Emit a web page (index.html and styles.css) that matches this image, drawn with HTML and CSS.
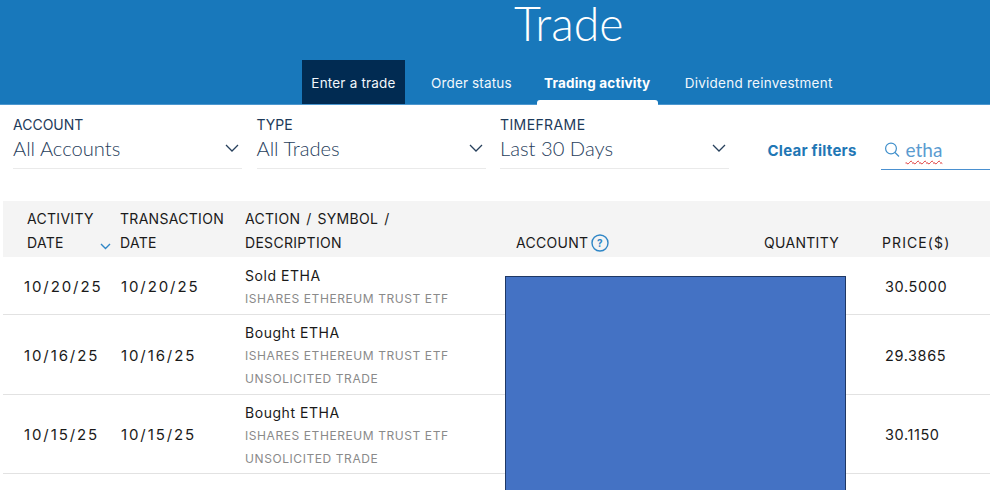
FILE: index.html
```html
<!DOCTYPE html>
<html lang="en">
<head>
<meta charset="utf-8">
<title>Trade</title>
<link rel="stylesheet" href="styles.css">
</head>
<body>
<header class="hero">
  <h1 class="title">Trade</h1>
  <nav class="tabs">
    <a class="tab tab-enter">Enter a trade</a>
    <a class="tab tab-status">Order status</a>
    <a class="tab tab-active">Trading activity</a>
    <a class="tab tab-div">Dividend reinvestment</a>
  </nav>
</header>
<section class="filters">
  <div class="filter">
    <div class="filter-label">ACCOUNT</div>
    <div class="filter-value"><span>All Accounts</span>
      <svg class="chev" width="14" height="8" viewBox="0 0 14 8"><path d="M1 1l6 6 6-6" fill="none" stroke="#27405c" stroke-width="1.3"/></svg></div>
  </div>
  <div class="filter">
    <div class="filter-label">TYPE</div>
    <div class="filter-value"><span>All Trades</span>
      <svg class="chev" width="14" height="8" viewBox="0 0 14 8"><path d="M1 1l6 6 6-6" fill="none" stroke="#27405c" stroke-width="1.3"/></svg></div>
  </div>
  <div class="filter">
    <div class="filter-label label-wide">TIMEFRAME</div>
    <div class="filter-value"><span>Last 30 Days</span>
      <svg class="chev" width="14" height="8" viewBox="0 0 14 8"><path d="M1 1l6 6 6-6" fill="none" stroke="#27405c" stroke-width="1.3"/></svg></div>
  </div>
  <a class="clear">Clear filters</a>
  <div class="search">
    <svg width="16" height="17" viewBox="0 0 16 17"><circle cx="7" cy="7.5" r="5.4" fill="none" stroke="#3f8fcb" stroke-width="1.2"/><path d="M11 11.5l4 4" stroke="#3f8fcb" stroke-width="1.3" fill="none"/></svg>
    <span class="search-text">etha</span>
  </div>
</section>
<section class="table">
  <div class="row head">
    <div class="cell"><div>ACTIVITY</div><div class="date-line">DATE<svg class="sort" width="11" height="7" viewBox="0 0 11 7"><path d="M1 1l4.500 4.500L10 1" fill="none" stroke="#2f86c6" stroke-width="1.4"/></svg></div></div>
    <div class="cell"><div>TRANSACTION</div><div>DATE</div></div>
    <div class="cell"><div class="spaced">ACTION / SYMBOL /</div><div>DESCRIPTION</div></div>
    <div class="cell cell-end"><div class="acct">ACCOUNT<svg width="18" height="18" viewBox="0 0 18 18"><circle cx="9" cy="9" r="8" fill="none" stroke="#2f86c6" stroke-width="1.4"/><text x="9" y="12.600" text-anchor="middle" class="qmark">?</text></svg></div></div>
    <div class="cell cell-end">QUANTITY</div>
    <div class="cell cell-end price-head">PRICE($)</div>
  </div>
  <div class="row r1">
    <div class="date d1">10/20/25</div><div class="date d2">10/20/25</div>
    <div class="desc"><div class="action">Sold ETHA</div><div class="sub">ISHARES ETHEREUM TRUST ETF</div></div>
    <div></div><div></div><div class="price">30.5000</div>
  </div>
  <div class="row r2">
    <div class="date d1">10/16/25</div><div class="date d2">10/16/25</div>
    <div class="desc"><div class="action">Bought ETHA</div><div class="sub">ISHARES ETHEREUM TRUST ETF</div><div class="sub">UNSOLICITED TRADE</div></div>
    <div></div><div></div><div class="price">29.3865</div>
  </div>
  <div class="row r2">
    <div class="date d1">10/15/25</div><div class="date d2">10/15/25</div>
    <div class="desc"><div class="action">Bought ETHA</div><div class="sub">ISHARES ETHEREUM TRUST ETF</div><div class="sub">UNSOLICITED TRADE</div></div>
    <div></div><div></div><div class="price">30.1150</div>
  </div>
</section>
<div class="redact"></div>
</body>
</html>
```

FILE: styles.css
```css
* { box-sizing: border-box; }
html, body { margin: 0; padding: 0; }
body {
  position: relative;
  width: 990px;
  height: 490px;
  overflow: hidden;
  background: #fff;
  font-family: "Inter", "Liberation Sans", sans-serif;
  color: #1a1a1a;
}
.hero {
  height: 105px;
  background: #1878bb;
  border-bottom: 1px solid #4c97cf;
  display: flex;
  flex-direction: column;
}
.title {
  margin: 0;
  height: 60px;
  padding-left: 514px;
  font-family: "Lato", sans-serif;
  font-weight: 300;
  font-size: 46.500px;
  line-height: 47px;
  color: #fff;
}
.tabs {
  display: flex;
  height: 44px;
  padding-left: 302px;
}
.tab {
  position: relative;
  display: flex;
  align-items: center;
  justify-content: center;
  padding-top: 2px;
  font-size: 13.500px;
  color: #f2f7fb;
  letter-spacing: 0.2px;
}
.tab-enter { width: 103px; background: #012b52; margin-right: 26px; }
.tab-status { margin-right: 25px; letter-spacing: 0.15px; }
.tab-active {
  width: 121px;
  font-weight: 700;
  color: #fff;
  margin-right: 27px;
}
.tab-div { letter-spacing: 0.25px; }
.tab-active::after {
  content: "";
  position: absolute;
  left: 0;
  right: 0;
  bottom: -1px;
  height: 5px;
  background: #fff;
  border-radius: 3px 3px 0 0;
}
.filters {
  display: flex;
  align-items: flex-start;
  height: 96px;
  padding: 10px 0 0 13px;
}
.filter { width: 229px; margin-right: 14.500px; }
.filter-label {
  font-size: 14px;
  line-height: 20px;
  color: #1d3a5a;
}
.label-wide { letter-spacing: 0.4px; }
.filter-value {
  display: flex;
  justify-content: space-between;
  align-items: center;
  height: 34px;
  padding: 0 3px 8px 0;
  border-bottom: 1px solid #eaeaea;
  font-family: "Lato", sans-serif;
  font-weight: 300;
  font-size: 20.200px;
  color: #27405c;
}
.clear {
  margin: 26px 0 0 24px;
  width: 113px;
  font-size: 15px;
  font-weight: 700;
  letter-spacing: 0.25px;
  color: #1f77b5;
  line-height: 20px;
}
.search {
  display: flex;
  align-items: center;
  gap: 6px;
  flex: 1;
  height: 40px;
  margin-top: 15px;
  padding: 0 0 0 3px;
  border-bottom: 1px solid #4a90d0;
}
.search-text {
  font-family: "Lato", sans-serif;
  font-size: 19px;
  color: #5a9bd0;
  text-decoration: underline wavy #d33 1px;
  text-underline-offset: 3px;
}
.table { margin-left: 3px; }
.row {
  display: grid;
  grid-template-columns: 117px 125px 271px 248px 118px 108px;
  border-bottom: 1px solid #e2e2e2;
}
.head {
  height: 56px;
  background: #f4f4f4;
  border-bottom: 0;
  font-size: 14px;
  line-height: 24px;
  letter-spacing: 0.3px;
  color: #1a1a1a;
  padding-top: 6px;
}
.spaced { word-spacing: 1.7px; }
.cell:first-child { padding-left: 24px; }
.cell-end { align-self: end; padding-bottom: 2px; }
.price-head { letter-spacing: 1.1px; }
.date-line { position: relative; }
.sort { position: absolute; left: 73px; top: 12px; }
.acct { display: flex; align-items: center; gap: 3px; }
.qmark { font-size: 10px; font-weight: 700; fill: #2f86c6; }
.r1 { height: 58px; align-items: center; }
.r2 { height: 79.500px; align-items: center; }
.date, .price { font-size: 14.500px; letter-spacing: 0.6px; padding-top: 2px; }
.date { font-size: 15px; letter-spacing: 1.9px; }
.d1 { padding-left: 21px; }
.d2 { padding-left: 1px; }
.price { padding-left: 3px; }
.desc { padding-top: 4px; }
.action { font-size: 14px; line-height: 22px; letter-spacing: 0.55px; }
.sub { font-size: 12px; line-height: 23px; color: #8a8a8a; letter-spacing: 0.58px; }
.redact {
  position: absolute;
  left: 505px;
  top: 276px;
  width: 341px;
  height: 220px;
  background: #4472c4;
  border: 1px solid #1f3864;
}
```
